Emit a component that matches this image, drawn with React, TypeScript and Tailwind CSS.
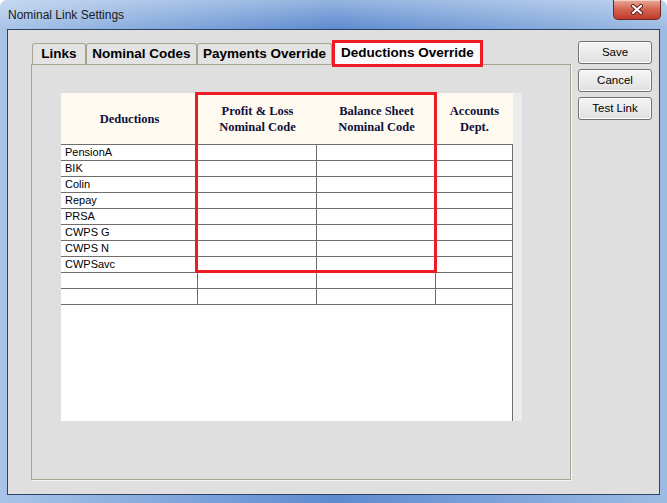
import React from 'react'

const rows = ['PensionA', 'BIK', 'Colin', 'Repay', 'PRSA', 'CWPS G', 'CWPS N', 'CWPSavc', '', '']

const tabs = [
  { label: 'Links', w: 'w-[54px]' },
  { label: 'Nominal Codes', w: 'w-[111px]' },
  { label: 'Payments Override', w: 'w-[135px]' },
]

function CloseButton() {
  return (
    <div className="mr-[6px] ml-auto flex h-[20px] w-[48px] items-center justify-center rounded-b-[5px] border border-t-0 border-[#6e2a22] bg-gradient-to-b from-[#e9a99b] via-[#d3634f] to-[#c0392b] shadow-[inset_0_1px_0_rgba(255,255,255,0.5)]">
      <svg width="14" height="11" viewBox="0 0 14 11">
        <path d="M3 2 L11 9 M11 2 L3 9" stroke="#5b1f18" strokeWidth="4" strokeLinecap="round" />
        <path d="M3 2 L11 9 M11 2 L3 9" stroke="#ffffff" strokeWidth="2.2" strokeLinecap="round" />
      </svg>
    </div>
  )
}

function WinButton({ children }: { children: React.ReactNode }) {
  return (
    <div className="flex h-[23px] w-[74px] items-center justify-center rounded-[3px] border border-[#707070] bg-gradient-to-b from-[#f6f6f6] to-[#e0e0e0] text-[11.5px] text-black shadow-[inset_0_0_0_1px_#fcfcfc] [font-family:'Liberation_Sans',Arial,sans-serif]">
      {children}
    </div>
  )
}

export default function App() {
  return (
    <div className="h-[503px] w-[667px] overflow-hidden rounded-t-[7px] bg-gradient-to-r from-[#a9c4e8] via-[#5d8bcf] to-[#9dbbe3] [font-family:'Liberation_Sans',Arial,sans-serif]">
      {/* Title bar */}
      <div className="flex h-[29px] items-start bg-gradient-to-b from-[rgba(255,255,255,0.35)] to-transparent">
        <span className="ml-[8px] mt-[8px] text-[12px] leading-[14px] text-[#1a1a1a]">Nominal Link Settings</span>
        <CloseButton />
      </div>

      {/* Client area */}
      <div className="mx-[7px] flex h-[466px] border border-[#2d4365] bg-[#dfdfdf]">
        {/* Tabs + panel */}
        <div className="ml-[23px] mt-[13px] flex flex-col">
          <div className="flex h-[21px] items-end pl-[1px]">
            {tabs.map((t) => (
              <div
                key={t.label}
                className={`${t.w} flex h-[21px] items-center justify-center rounded-t-[3px] border border-b-0 border-[#a6a68e] bg-[#e3e3e3] text-[13.5px] font-bold text-black`}
              >
                {t.label}
              </div>
            ))}
            <div className="relative z-10 -mb-[3px] flex h-[27px] w-[151px] items-center justify-center border-[3px] border-[#ed1c24] bg-[#fbfbfe] text-[13.5px] font-bold text-black">
              Deductions Override
            </div>
          </div>

          <div className="h-[416px] w-[540px] border border-[#a6a68e] bg-[#dfdfdf] pl-[29px] pt-[28px] shadow-[1px_1px_0_#f4f4f4]">
            <div className="flex h-[328px]">
              <div className="relative flex w-[452px] flex-col bg-white">
                {/* Header */}
                <div className="flex h-[51px] bg-[#fffaf0] text-[12.5px] font-bold leading-[16px] text-[#10103a] [font-family:'Liberation_Serif','Times_New_Roman',serif]">
                  <div className="flex w-[137px] items-center justify-center">Deductions</div>
                  <div className="flex w-[119px] items-center justify-center text-center">
                    Profit &amp; Loss
                    <br />
                    Nominal Code
                  </div>
                  <div className="flex w-[119px] items-center justify-center text-center">
                    Balance Sheet
                    <br />
                    Nominal Code
                  </div>
                  <div className="flex w-[77px] items-center justify-center text-center">
                    Accounts
                    <br />
                    Dept.
                  </div>
                </div>

                {/* Rows */}
                {rows.map((r, i) => (
                  <div key={i} className="flex h-[16px] border-t border-[#6e6e6e] text-[11px] leading-[15px] text-black">
                    <div className="w-[137px] border-r border-[#6e6e6e] pl-[4px]">{r}</div>
                    <div className="w-[119px] border-r border-[#6e6e6e]" />
                    <div className="w-[119px] border-r border-[#6e6e6e]" />
                    <div className="w-[77px] border-r border-[#6e6e6e]" />
                  </div>
                ))}
                <div className="flex-1 border-t border-r border-[#6e6e6e]" />

                {/* Highlight */}
                <div className="absolute left-[134px] top-[-1px] h-[181px] w-[242px] border-[3px] border-[#ed1c24]" />
              </div>
              <div className="w-[9px] bg-[#ececec]" />
            </div>
          </div>
        </div>

        {/* Buttons */}
        <div className="ml-[7px] mt-[11px] flex flex-col gap-[5px]">
          <WinButton>Save</WinButton>
          <WinButton>Cancel</WinButton>
          <WinButton>Test Link</WinButton>
        </div>
      </div>
    </div>
  )
}
